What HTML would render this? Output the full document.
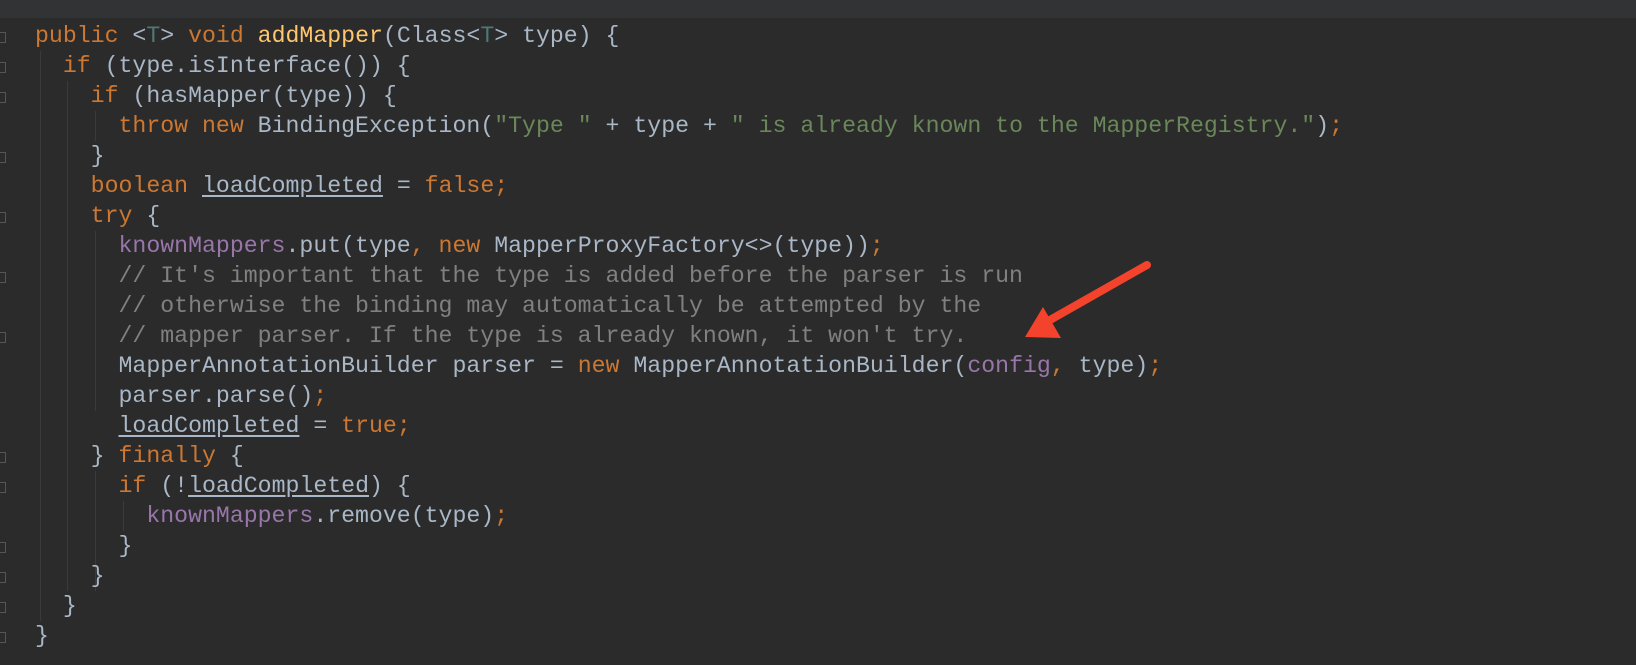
<!DOCTYPE html>
<html><head><meta charset="utf-8"><style>
html,body{margin:0;padding:0;width:1636px;height:662px;background:#2b2b2b;overflow:hidden}
#top{position:absolute;left:0;top:0;width:1636px;height:18px;background:#313335}
.l{position:absolute;left:35px;height:30px;line-height:30px;font-family:"Liberation Mono",monospace;font-size:23.2px;color:#a9b7c6;white-space:pre}
.k{color:#cc7832}.m{color:#ffc66d}.t{color:#507874}.s{color:#6a8759}.c{color:#808080}.f{color:#9876aa}
.u{text-decoration:underline;text-underline-offset:3px;text-decoration-color:#a9b7c6}
.g{position:absolute;width:1px;background:#3b3b3b}
.fm{position:absolute;left:0;width:5px;height:9px;border:1px solid #555;border-left:none}
</style></head><body>
<div id="top"></div>
<div style="position:absolute;left:0;top:3px;width:1636px;height:662px">
<div class="g" style="left:40px;top:48px;height:570px"></div>
<div class="g" style="left:67px;top:78px;height:510px"></div>
<div class="g" style="left:95px;top:108px;height:30px"></div>
<div class="g" style="left:95px;top:228px;height:180px"></div>
<div class="g" style="left:95px;top:468px;height:120px"></div>
<div class="g" style="left:123px;top:498px;height:30px"></div>
<div class="l" style="top:18px"><span class="k">public </span>&lt;<span class="t">T</span>&gt; <span class="k">void </span><span class="m">addMapper</span>(Class&lt;<span class="t">T</span>&gt; type) {</div>
<div class="l" style="top:48px">  <span class="k">if </span>(type.isInterface()) {</div>
<div class="l" style="top:78px">    <span class="k">if </span>(hasMapper(type)) {</div>
<div class="l" style="top:108px">      <span class="k">throw new </span>BindingException(<span class="s">"Type "</span> + type + <span class="s">" is already known to the MapperRegistry."</span>)<span class="k">;</span></div>
<div class="l" style="top:138px">    }</div>
<div class="l" style="top:168px">    <span class="k">boolean </span><span class="u">loadCompleted</span> = <span class="k">false;</span></div>
<div class="l" style="top:198px">    <span class="k">try </span>{</div>
<div class="l" style="top:228px">      <span class="f">knownMappers</span>.put(type<span class="k">, new </span>MapperProxyFactory&lt;&gt;(type))<span class="k">;</span></div>
<div class="l" style="top:258px">      <span class="c">// It's important that the type is added before the parser is run</span></div>
<div class="l" style="top:288px">      <span class="c">// otherwise the binding may automatically be attempted by the</span></div>
<div class="l" style="top:318px">      <span class="c">// mapper parser. If the type is already known, it won't try.</span></div>
<div class="l" style="top:348px">      MapperAnnotationBuilder parser = <span class="k">new </span>MapperAnnotationBuilder(<span class="f">config</span><span class="k">, </span>type)<span class="k">;</span></div>
<div class="l" style="top:378px">      parser.parse()<span class="k">;</span></div>
<div class="l" style="top:408px">      <span class="u">loadCompleted</span> = <span class="k">true;</span></div>
<div class="l" style="top:438px">    } <span class="k">finally </span>{</div>
<div class="l" style="top:468px">      <span class="k">if </span>(!<span class="u">loadCompleted</span>) {</div>
<div class="l" style="top:498px">        <span class="f">knownMappers</span>.remove(type)<span class="k">;</span></div>
<div class="l" style="top:528px">      }</div>
<div class="l" style="top:558px">    }</div>
<div class="l" style="top:588px">  }</div>
<div class="l" style="top:618px">}</div>
<div class="fm" style="top:29px"></div><div class="fm" style="top:59px"></div><div class="fm" style="top:89px"></div>
<div class="fm" style="top:149px"></div><div class="fm" style="top:209px"></div><div class="fm" style="top:269px"></div>
<div class="fm" style="top:329px"></div><div class="fm" style="top:449px"></div><div class="fm" style="top:479px"></div>
<div class="fm" style="top:539px"></div><div class="fm" style="top:569px"></div><div class="fm" style="top:599px"></div><div class="fm" style="top:629px"></div>
</div>
<svg style="position:absolute;left:0;top:0" width="1636" height="662">
<line x1="1147" y1="265" x2="1050" y2="320" stroke="#f4432c" stroke-width="8" stroke-linecap="round"/>
<polygon points="1025,337 1043,307 1061,338" fill="#f4432c"/>
</svg>
</body></html>
